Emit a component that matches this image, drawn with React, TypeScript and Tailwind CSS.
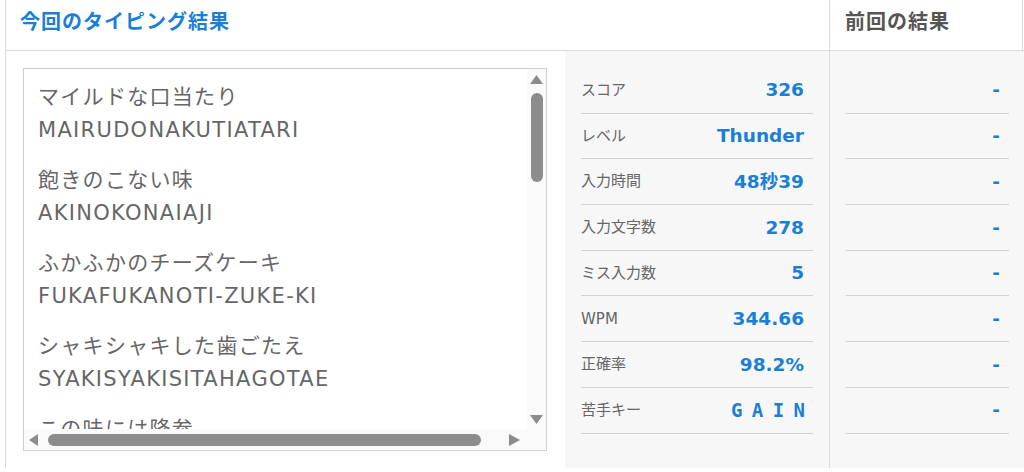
const stats = [
  { label: "スコア", value: "326" },
  { label: "レベル", value: "Thunder" },
  { label: "入力時間", value: "48秒39" },
  { label: "入力文字数", value: "278" },
  { label: "ミス入力数", value: "5" },
  { label: "WPM", value: "344.66" },
  { label: "正確率", value: "98.2%" },
  { label: "苦手キー", value: "G A I N", mono: true },
];

const words = [
  { jp: "マイルドな口当たり", en: "MAIRUDONAKUTIATARI" },
  { jp: "飽きのこない味", en: "AKINOKONAIAJI" },
  { jp: "ふかふかのチーズケーキ", en: "FUKAFUKANOTI-ZUKE-KI" },
  { jp: "シャキシャキした歯ごたえ", en: "SYAKISYAKISITAHAGOTAE" },
  { jp: "この味には降参", en: "KONOAJINIHAKOUSAN" },
];

const font = { fontFamily: '"DejaVu Sans", "Noto Sans CJK JP", sans-serif' };

function Tri({ dir }: { dir: "up" | "down" | "left" | "right" }) {
  const pts = {
    up: "6.5,0 13,9 0,9",
    down: "0,0 13,0 6.5,9",
    left: "9,0 9,12 0,6",
    right: "0,0 11,6 0,12",
  }[dir];
  const vertical = dir === "up" || dir === "down";
  return (
    <svg
      width={vertical ? 13 : dir === "left" ? 9 : 11}
      height={vertical ? 9 : 12}
      className="shrink-0"
    >
      <polygon points={pts} fill="#8c8c8c" />
    </svg>
  );
}

function WordBox() {
  return (
    <div className="flex h-full w-[524px] flex-col border border-[#cfcfcf] bg-white">
      <div className="flex min-h-0 flex-1">
        <div className="min-w-0 flex-1 overflow-hidden pl-[14px] pt-[12px] text-[21px] leading-[33px] tracking-[1.3px] text-[#666]">
          {words.map((w) => (
            <div key={w.en} className="mb-[17px] whitespace-nowrap">
              <div>{w.jp}</div>
              <div>{w.en}</div>
            </div>
          ))}
        </div>
        <div className="flex w-[19px] flex-col items-center bg-[#fafafa] pb-[5px] pt-[6px]">
          <Tri dir="up" />
          <div className="mt-[9px] h-[89px] w-[12px] rounded-full bg-[#8c8c8c]" />
          <div className="flex-1" />
          <Tri dir="down" />
        </div>
      </div>
      <div className="flex h-[21px] items-center bg-[#fafafa] pl-[5px]">
        <Tri dir="left" />
        <div className="ml-[10px] h-[12px] w-[433px] rounded-full bg-[#8c8c8c]" />
        <div className="ml-[28px]">
          <Tri dir="right" />
        </div>
      </div>
    </div>
  );
}

export default function App() {
  return (
    <div className="h-[472px] w-[1024px] bg-white" style={font}>
      <div className="ml-[5px] grid h-[468px] w-[1018px] grid-cols-[824px_194px] grid-rows-[51px_417px] border-x border-b border-[#dcdcdc]">
        <div className="flex items-center border-b border-r border-[#dcdcdc] pb-[6px] pl-[14px] text-[20px] font-bold tracking-[1px] text-[#1b7fd6]">
          今回のタイピング結果
        </div>
        <div className="flex items-center border-b border-[#dcdcdc] pb-[6px] pl-[15px] text-[20px] font-bold tracking-[1px] text-[#555]">
          前回の結果
        </div>

        <div className="flex border-r border-[#dcdcdc]">
          <div className="bg-white pb-[17px] pl-[17px] pr-[18px] pt-[17px]">
            <WordBox />
          </div>
          <div className="flex-1 bg-[#f7f7f7] px-[16px] pt-[17px]">
            {stats.map((s) => (
              <div
                key={s.label}
                className="flex h-[45.7px] items-center justify-between border-b border-[#d2d2d2] pr-[9px]"
              >
                <span className="text-[15px] text-[#666]">{s.label}</span>
                <span
                  className="text-[18.5px] font-bold text-[#1b7fd6]"
                  style={
                    s.mono
                      ? {
                          fontFamily: '"DejaVu Sans Mono", monospace',
                          fontSize: "19px",
                          letterSpacing: "-1px",
                        }
                      : undefined
                  }
                >
                  {s.value}
                </span>
              </div>
            ))}
          </div>
        </div>

        <div className="bg-[#f7f7f7] pl-[16px] pr-[15px] pt-[17px]">
          {stats.map((s) => (
            <div
              key={s.label}
              className="flex h-[45.7px] items-center justify-end border-b border-[#d2d2d2] pr-[9px]"
            >
              <span className="text-[18.5px] font-bold text-[#1b7fd6]">-</span>
            </div>
          ))}
        </div>
      </div>
    </div>
  );
}
